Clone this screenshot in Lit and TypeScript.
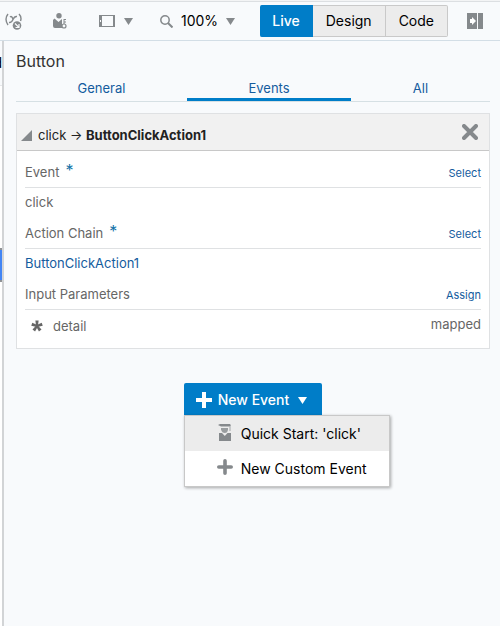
import { LitElement, html, css, svg } from "lit";
import { customElement, state } from "lit/decorators.js";

const caret = html`<svg class="caret" width="9" height="7" viewBox="0 0 9 7" aria-hidden="true"><path d="M0 0h9L4.500 7z" fill="currentColor" /></svg>`;
const plus = html`<svg width="16" height="16" viewBox="0 0 16 16" aria-hidden="true"><path d="M6 0h4v6h6v4h-6v6H6v-6H0V6h6z" fill="currentColor" /></svg>`;
const softPlus = html`<svg width="16" height="16" viewBox="0 0 16 16" aria-hidden="true"><path d="M8 1.800v12.400M1.800 8h12.400" stroke="currentColor" stroke-width="3.600" stroke-linecap="round" /></svg>`;
const starRays = [0, 72, 144, 216, 288].map((a) => svg`<path d="M-1 0L-1.600-5.500h3.200L1 0z" transform="rotate(${a})" />`);

@customElement("app-root")
export class AppRoot extends LitElement {
  static styles = css`
    :host {
      display: flex;
      flex-direction: column;
      min-height: 100vh;
      box-sizing: border-box;
      overflow: hidden;
      background: #f8fafc;
      border-top: 1px solid #f3f4f5;
      color: #000;
      font: 14px/20px Inter, "Liberation Sans", sans-serif;
    }
    * { box-sizing: border-box; }
    button { font: inherit; color: inherit; background: none; border: 0; padding: 0; margin: 0; cursor: pointer; }
    svg { display: block; flex: none; }
    a { color: #145c9e; text-decoration: none; }
    .toolbar {
      display: flex;
      align-items: center;
      height: 40px;
      padding: 0 17px 0 4px;
      border-top: 1px solid #dcdfe2;
      border-bottom: 1px solid #d3dee6;
      color: #85898c;
    }
    .tool { display: flex; align-items: center; }
    .user { margin-left: 30px; }
    .device { gap: 9px; margin-left: 32px; }
    .zoom { gap: 8px; margin-left: 27px; }
    .zoom-value { color: #000; }
    .modes { display: flex; margin-left: auto; }
    .mode { height: 32px; padding: 0 13px; background: #ececec; color: #000; border: 1px solid #c9c9c9; border-left-width: 0; }
    .mode:first-child { padding: 0 12px; }
    .mode:last-child { border-radius: 0 2px 2px 0; }
    .mode.on { background: #007dc8; border-color: #007dc8; color: #fff; font-weight: 500; border-radius: 2px 0 0 2px; }
    .dock { margin-left: 19px; }
    .main { display: flex; flex: 1; }
    .edge {
      display: flex;
      flex-direction: column;
      align-items: flex-end;
      width: 4px;
      flex: none;
      overflow: hidden;
      background: #fff;
      border-right: 2px solid #d2d4d6;
    }
    .edge-label { height: 45px; padding-top: 12px; background: #f8fafc; border-bottom: 1px solid #e6e8ea; }
    .edge-mark { width: 100%; height: 34px; margin-top: 162px; flex: none; background: #4285f4; border: 2px solid #8f9295; border-width: 2px 0; }
    .panel { flex: 1; min-width: 0; padding: 9px 10px 0 12px; }
    h1 { margin: 0; font-size: 16px; line-height: 22px; font-weight: 400; color: #333; }
    .tabs { display: flex; margin-top: 3px; border-bottom: 1px solid #d6e0e4; }
    .tab { flex: 171; height: 26px; padding-top: 2px; font-size: 13px; color: #145c9e; border-bottom: 3px solid transparent; }
    .tab.wide { flex: 164; }
    .tab.last { flex: 139; }
    .tab.on { border-bottom-color: #007dc8; }
    .card { margin-top: 11px; background: #fff; border: 1px solid #dfe1e3; color: #666; font-size: 13px; }
    .card-head { display: flex; align-items: center; height: 37px; padding: 6px 11px 0 4px; gap: 6px; background: #f1f1f1; border-bottom: 1px solid #c8c8c8; color: #222; }
    .card-head h2 { flex: 1; margin: 0; font-size: 13px; line-height: 20px; font-weight: 400; }
    .card-head b { font-weight: 700; }
    .close { color: #85898c; padding-bottom: 6px; }
    .card-body { padding: 6px 8px 8px; }
    .row { display: flex; align-items: center; height: 30px; padding-bottom: 2px; }
    .label { height: 31px; padding-bottom: 0; border-bottom: 1px solid #dfe1e3; }
    .star { margin-left: 6px; padding-bottom: 4px; color: #1473a8; font-size: 16px; }
    .action { margin-left: auto; padding-top: 2px; font-size: 11px; }
    .param { gap: 10px; padding: 4px 0 2px 6px; }
    .mapped { margin-left: auto; padding-bottom: 4px; }
    .create { position: relative; width: max-content; margin: 34px auto 0; }
    .new { display: flex; align-items: center; gap: 6px; height: 32px; padding: 2px 15px 0 12px; background: #007dc8; color: #fff; border-radius: 2px 2px 0 0; font-weight: 500; }
    .new .caret { margin-left: 3px; }
    .menu { position: absolute; top: 100%; left: 0; width: 206px; margin: 0; padding: 0; list-style: none; background: #fff; border: 1px solid #c8c8c8; box-shadow: 1px 1px 3px #0005; }
    .item { display: flex; align-items: center; gap: 8px; width: 100%; height: 35px; padding: 1px 0 0 32px; color: #000; text-align: left; }
    .item.on { background: #ececec; }
    .item svg { color: #85898c; margin-bottom: 4px; }
  `;

  @state() private mode = "Live";
  @state() private tab = "Events";
  @state() private open = true;

  render() {
    return html`
      <header class="toolbar">
        <button class="tool" aria-label="Variables">
          <svg width="19" height="17" viewBox="0 0 19 17" fill="none" stroke="currentColor" stroke-width="1.400">
            <path d="M4 1Q0 6 4 12M15 1Q18 4 16.500 8M6 4Q8 2.500 9 6.500M13 3.500Q10.500 3 9 6.500T5 9.500" />
            <circle cx="13" cy="12.500" r="4.300" fill="currentColor" stroke="none" />
            <path d="M11 10.500l3.500 3.500M15 11v3.500h-3.500" stroke="#f8fafc" stroke-width="1.200" />
          </svg>
        </button>
        <button class="tool user" aria-label="User roles">
          <svg width="14" height="16" viewBox="0 0 14 16" fill="currentColor">
            <circle cx="6" cy="2.800" r="2.700" />
            <path d="M0 7L1.500 5.500 5.500 9 9 6v9H2Q0 15 0 13z" />
            <path d="M11 6v6M11 6.500h2M11 9h2" stroke="currentColor" />
            <circle cx="11" cy="13" r="2" fill="#f8fafc" stroke="currentColor" stroke-width="1.200" />
          </svg>
        </button>
        <button class="tool device" aria-label="Screen size">
          <svg width="16" height="12" viewBox="0 0 16 12" fill="currentColor">
            <path fill-rule="evenodd" d="M0 0h16v12H0zM3 1v10h11V1zM1 5v2h1V5z" />
          </svg>
          ${caret}
        </button>
        <button class="tool zoom">
          <svg width="13" height="13" viewBox="0 0 13 13" fill="none" stroke="currentColor">
            <circle cx="5" cy="5" r="4.200" stroke-width="1.500" /><path d="M8 8l4.500 4.500" stroke-width="2" />
          </svg>
          <span class="zoom-value">100%</span>
          ${caret}
        </button>
        <div class="modes">
          ${["Live", "Design", "Code"].map((m) => html`<button class="mode ${this.mode === m ? "on" : ""}" @click=${() => (this.mode = m)}>${m}</button>`)}
        </div>
        <button class="dock" aria-label="Collapse panel">
          <svg width="16" height="16" viewBox="0 0 16 16">
            <path d="M0 0h10v16H0zM11 0h5v16h-5z" fill="currentColor" />
            <path d="M3 6h2V4l4 4-4 4v-2H3z" fill="#fff" />
          </svg>
        </button>
      </header>
      <div class="main">
        <div class="edge"><div class="edge-label">d</div><div class="edge-mark"></div></div>
        <main class="panel">
          <h1>Button</h1>
          <nav class="tabs" role="tablist">
            ${[["General", ""], ["Events", "wide"], ["All", "last"]].map(
              ([name, size]) => html`<button role="tab" aria-selected=${this.tab === name} class="tab ${size} ${this.tab === name ? "on" : ""}" @click=${() => (this.tab = name)}>${name}</button>`
            )}
          </nav>
          <section class="card">
            <header class="card-head">
              <svg width="11" height="11" viewBox="0 0 11 11"><path d="M11 0v11H0z" fill="#85898c" /></svg>
              <h2>click → <b>ButtonClickAction1</b></h2>
              <button class="close" aria-label="Remove event">
                <svg width="16" height="16" viewBox="0 0 16 16"><path d="M2 2l12 12M14 2L2 14" stroke="currentColor" stroke-width="4" stroke-linecap="round" /></svg>
              </button>
            </header>
            <div class="card-body">
              <div class="row label">Event <span class="star">*</span><a class="action" href="#event">Select</a></div>
              <div class="row">click</div>
              <div class="row label">Action Chain <span class="star">*</span><a class="action" href="#chain">Select</a></div>
              <div class="row"><a href="#action">ButtonClickAction1</a></div>
              <div class="row label">Input Parameters<a class="action" href="#assign">Assign</a></div>
              <div class="row param">
                <svg width="12" height="12" viewBox="-6 -6 12 12" fill="currentColor">${starRays}</svg>
                <span>detail</span><span class="mapped">mapped</span>
              </div>
            </div>
          </section>
          <div class="create">
            <button class="new" aria-expanded=${this.open} @click=${() => (this.open = !this.open)}>${plus}<span>New Event</span>${caret}</button>
            ${this.open
              ? html`<ul class="menu">
                  <li><button class="item on">
                    <svg width="16" height="17" viewBox="0 0 16 17" fill="currentColor">
                      <path d="M3 0h10l1 1.500-2 1H4L1 1z" />
                      <path d="M4 4h7v1.500Q10.500 9 7.800 9T4 5.500z" opacity="0.800" />
                      <path d="M12.500 2h1v5h-1z" opacity="0.700" />
                      <path d="M2 9h3l2.800 3L10.500 9H14v8H2z" />
                    </svg>Quick Start: 'click'</button></li>
                  <li><button class="item">${softPlus}New Custom Event</button></li>
                </ul>`
              : ""}
          </div>
        </main>
      </div>
    `;
  }
}
